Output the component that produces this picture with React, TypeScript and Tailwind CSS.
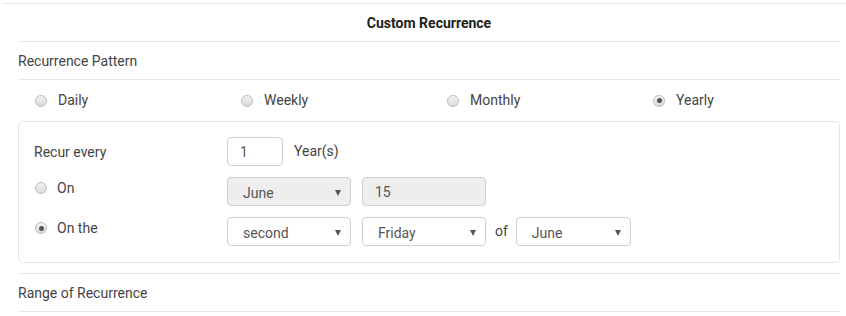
import type { ReactNode } from "react";

const font = { fontFamily: "Roboto, 'Liberation Sans', Arial, sans-serif" };

function Radio({ checked = false }: { checked?: boolean }) {
  return (
    <span className="relative inline-flex w-[12px] h-[12px] shrink-0 items-center justify-center rounded-full border border-[#bcbcbc] bg-gradient-to-b from-[#f3f3f3] to-[#dadada]">
      {checked && <span className="w-[5px] h-[5px] rounded-full bg-[#555]" />}
    </span>
  );
}

function Arrow() {
  return (
    <svg
      className="pointer-events-none absolute right-[9px] top-[12px]"
      width="6"
      height="6"
      viewBox="0 0 6 6"
    >
      <polygon points="0,0 6,0 3,6" fill="#555" />
    </svg>
  );
}

function Select({
  value,
  width,
  disabled = false,
}: {
  value: string;
  width: string;
  disabled?: boolean;
}) {
  return (
    <div
      className={`relative h-[29px] ${width} shrink-0 rounded-[4px] border border-[#cfcfcf] ${
        disabled ? "bg-[#eeeeee]" : "bg-white"
      }`}
    >
      <div className="flex h-full items-center pl-[15px] pt-[3px] text-[#555]">
        {value}
      </div>
      <Arrow />
    </div>
  );
}

function Field({
  value,
  width,
  disabled = false,
}: {
  value: string;
  width: string;
  disabled?: boolean;
}) {
  return (
    <div
      className={`flex h-[29px] ${width} shrink-0 items-center rounded-[4px] border border-[#cfcfcf] pl-[12px] pt-[1px] text-[#555] ${
        disabled ? "bg-[#eeeeee]" : "bg-white"
      }`}
    >
      {value}
    </div>
  );
}

function RadioLabel({ checked, children }: { checked?: boolean; children: ReactNode }) {
  return (
    <div className="flex h-[20px] items-center gap-[10px] pl-[1px]">
      <Radio checked={checked} />
      <span>{children}</span>
    </div>
  );
}

export default function App() {
  const patterns = ["Daily", "Weekly", "Monthly", "Yearly"];

  return (
    <div className="h-[316px] w-[846px] bg-white text-[14px] text-[#444]" style={font}>
      <div className="ml-[3px] pt-[3px]">
        <div className="border-t border-[#e8e8e8]" />
      </div>

      <div className="pl-[18px] pr-[6px]">
        {/* Header */}
        <div className="flex h-[38px] items-center justify-center border-b border-[#e8e8e8] pt-px font-bold text-[#222]">
          Custom Recurrence
        </div>

        <div className="flex h-[38px] items-center border-b border-[#e8e8e8] pt-px">
          Recurrence Pattern
        </div>

        {/* Pattern choice */}
        <div className="grid h-[41px] grid-cols-[repeat(4,206px)] items-center pl-[17px]">
          {patterns.map((p) => (
            <div key={p} className="flex items-center gap-[11px]">
              <Radio checked={p === "Yearly"} />
              <span>{p}</span>
            </div>
          ))}
        </div>

        {/* Yearly options */}
        <div className="flex flex-col gap-[11px] rounded-[5px] border border-[#e6e6e6] px-[15px] pt-[15px] pb-[16px]">
          <div className="flex items-center">
            <div className="w-[193px] shrink-0 pt-px">Recur every</div>
            <Field value="1" width="w-[56px]" />
            <span className="ml-[11px]">Year(s)</span>
          </div>

          <div className="flex items-start">
            <div className="w-[193px] shrink-0 pt-[1px]">
              <RadioLabel>On</RadioLabel>
            </div>
            <div className="flex gap-[11px]">
              <Select value="June" width="w-[124px]" disabled />
              <Field value="15" width="w-[124px]" disabled />
            </div>
          </div>

          <div className="flex items-start">
            <div className="w-[193px] shrink-0 pt-[1px]">
              <RadioLabel checked>On the</RadioLabel>
            </div>
            <div className="flex items-center">
              <Select value="second" width="w-[124px]" />
              <div className="ml-[11px]">
                <Select value="Friday" width="w-[124px]" />
              </div>
              <span className="ml-[9px] mr-[8px]">of</span>
              <Select value="June" width="w-[115px]" />
            </div>
          </div>
        </div>

        <div className="mt-[10px] flex h-[39px] items-center border-y border-[#e8e8e8] pt-px">
          Range of Recurrence
        </div>
      </div>
    </div>
  );
}
